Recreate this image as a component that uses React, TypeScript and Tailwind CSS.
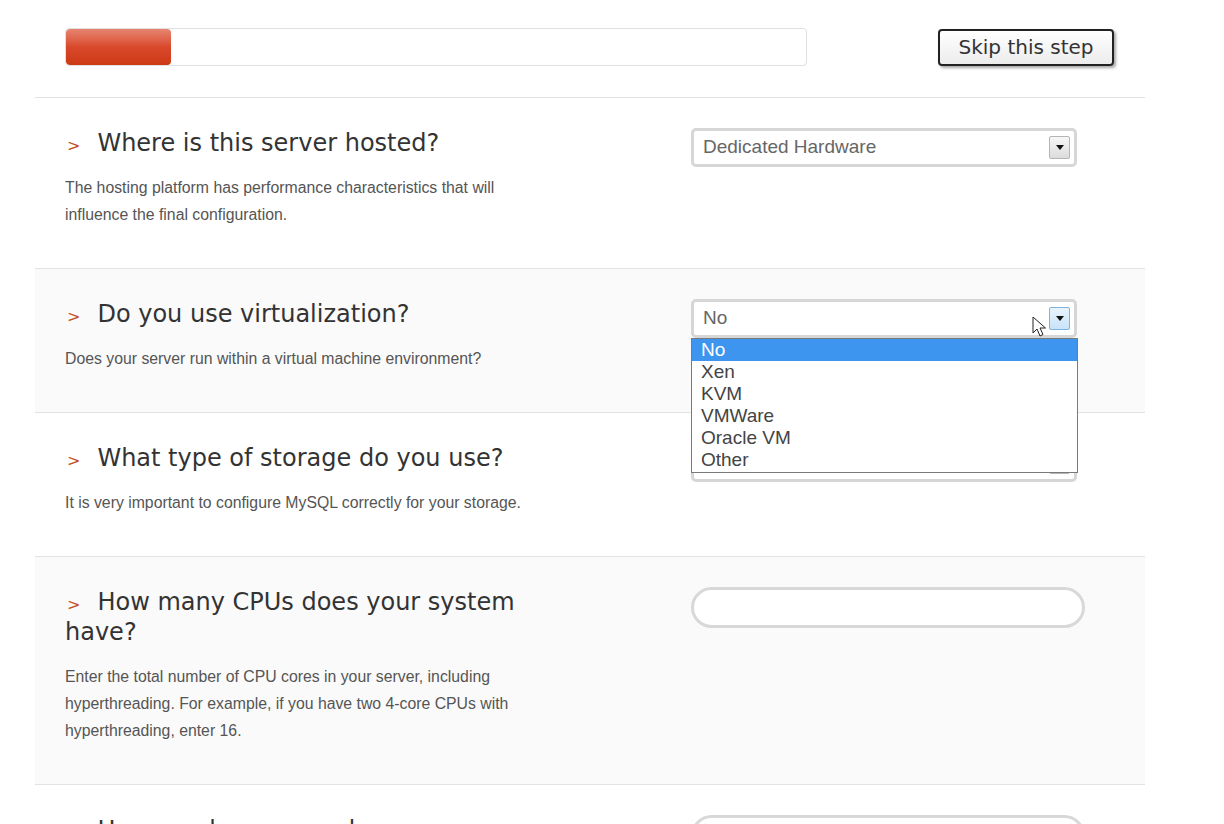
import React from "react";

const heading = "font-['DejaVu_Sans',sans-serif] text-[24px] leading-[30px] text-[#333]";
const desc = "font-['Liberation_Sans',Arial,sans-serif] text-[15.8px] leading-[27px] text-[#555]";

const Arrow = ({ active }: { active?: boolean }) => (
  <span
    className={
      "flex items-center justify-center w-[21px] h-[23px] border rounded-[2px] " +
      (active
        ? "border-[#7fb3dd] bg-gradient-to-b from-[#e8f4fd] to-[#c9e3f8]"
        : "border-[#b5b5b5] bg-gradient-to-b from-[#f7f7f7] to-[#dcdcdc]")
    }
  >
    <svg width="8" height="5" viewBox="0 0 8 5">
      <path d="M0 0h8L4 5z" fill="#111" />
    </svg>
  </span>
);

const Select = ({ value, active }: { value: string; active?: boolean }) => (
  <div className="flex items-center justify-between w-[386px] h-[39px] bg-white border-[3px] border-[#d6d6d6] rounded-[5px] pl-[9px] pr-[4px]">
    <span className="font-['Liberation_Sans',Arial,sans-serif] text-[19px] text-[#666]">{value}</span>
    <Arrow active={active} />
  </div>
);

const Input = () => (
  <div className="w-[394px] h-[41px] bg-white border-[3px] border-[#d8d8d8] rounded-full" />
);

const Section = ({
  title,
  text,
  control,
  shaded,
}: {
  title: string;
  text: React.ReactNode;
  control: React.ReactNode;
  shaded?: boolean;
}) => (
  <div className={"flex border-t border-[#e2e2e2] pl-[30px] pt-[30px] pb-10 " + (shaded ? "bg-[#fafafa]" : "bg-white")}>
    <div className="w-[460px]">
      <h2 className={heading}>
        <span className="text-[16px] leading-none text-[#c4532d] mr-[17px] ml-[2px]">&gt;</span>
        {title}
      </h2>
      <p className={desc + " mt-4"}>{text}</p>
    </div>
    <div className="ml-[166px] relative">{control}</div>
  </div>
);

const options = ["No", "Xen", "KVM", "VMWare", "Oracle VM", "Other"];

export default function App() {
  return (
    <div className="w-[1224px] h-[824px] overflow-hidden bg-white">
      <div className="ml-[35px] w-[1110px]">
        <div className="flex items-center pl-[30px] pt-[28px] pb-[31px]">
          <div className="w-[742px] h-[38px] border border-[#e0e0e0] rounded-[4px] bg-white overflow-hidden">
            <div className="w-[105px] h-full rounded-[4px] bg-gradient-to-b from-[#e68470] via-[#d9482a] to-[#cc3a14]" />
          </div>
          <button className="ml-[131px] w-[176px] h-[37px] border-2 border-[#222] rounded-[4px] bg-gradient-to-b from-white to-[#ececec] shadow-[2px_2px_3px_rgba(0,0,0,0.35)] font-['DejaVu_Sans',sans-serif] text-[20px] text-[#333]">
            Skip this step
          </button>
        </div>

        <Section
          title="Where is this server hosted?"
          text="The hosting platform has performance characteristics that will influence the final configuration."
          control={<Select value="Dedicated Hardware" />}
        />

        <Section
          shaded
          title="Do you use virtualization?"
          text="Does your server run within a virtual machine environment?"
          control={
            <>
              <Select value="No" active />
              <div className="absolute left-0 top-[39px] z-10 w-[387px] border border-[#7a7a7a] bg-white pb-[1px]">
                {options.map((o, i) => (
                  <div
                    key={o}
                    className={
                      "h-[22px] pl-[9px] font-['Liberation_Sans',Arial,sans-serif] text-[19px] leading-[22px] " +
                      (i === 0 ? "bg-[#3d95ef] text-white" : "text-[#444]")
                    }
                  >
                    {o}
                  </div>
                ))}
              </div>
              <svg className="absolute left-[341px] top-[17px] z-20" width="14" height="22" viewBox="0 0 14 22">
                <path d="M1 1v16l4-4 3 7 3-1.5-3-6.5h5.5z" fill="#fff" stroke="#222" strokeWidth="1" strokeLinejoin="round" />
              </svg>
            </>
          }
        />

        <Section
          title="What type of storage do you use?"
          text="It is very important to configure MySQL correctly for your storage."
          control={<Select value="Local Disk" />}
        />

        <Section
          shaded
          title="How many CPUs does your system have?"
          text="Enter the total number of CPU cores in your server, including hyperthreading. For example, if you have two 4-core CPUs with hyperthreading, enter 16."
          control={<Input />}
        />

        <Section
          title="How much memory does your server have?"
          text="Enter the total amount of RAM installed in your server."
          control={<Input />}
        />
      </div>
    </div>
  );
}
